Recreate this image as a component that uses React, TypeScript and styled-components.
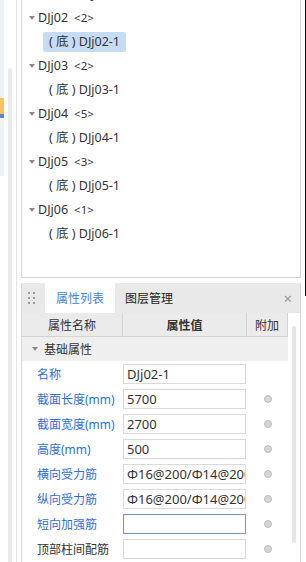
import React from "react";
import styled, { createGlobalStyle } from "styled-components";

const GlobalStyle = createGlobalStyle`
  html, body {
    margin: 0;
    padding: 0;
    width: 306px;
    height: 562px;
    overflow: hidden;
    background: #fff;
  }
  body {
    font-family: "Noto Sans", "Noto Sans CJK SC", sans-serif;
    font-size: 12px;
    color: #333;
  }
  * { box-sizing: border-box; }
`;

const Page = styled.div`
  display: flex;
  height: 562px;
`;

const LeftStrip = styled.div`
  width: 17px;
  display: flex;
  border-right: 1px solid #e3e3e3;
`;

const Edge = styled.div`
  width: 4px;
  height: 176px;
  background: #f2f3f5;
  padding-top: 98px;
`;

const EdgeIcon = styled.div`
  width: 4px;
  height: 20px;
  background: #f2c464;
  border-bottom: 4px solid #5b86c8;
`;

const Track = styled.div`
  width: 4px;
  margin: 68px 0 0 4px;
  background: #ebebeb;
  border-radius: 2px 2px 0 0;
`;

const Main = styled.div`
  width: 284px;
  padding-left: 4px;
  display: flex;
  flex-direction: column;
  gap: 5px;
`;

const RightEdge = styled.div`
  width: 5px;
  border-right: 1px solid #111;
  height: 296px;
`;

/* ---------- tree ---------- */

const TreeBox = styled.div`
  height: 278px;
  border: 1px solid #d9d9d9;
  border-top: none;
  overflow: hidden;
  flex-shrink: 0;
`;

// scrolled: the first leaf sits mostly above the top edge
const TreeList = styled.div`
  margin-top: -18px;
`;

const TreeRow = styled.div`
  height: 24px;
  display: flex;
  align-items: center;
  padding-left: 7px;
  line-height: 20px;
  font-size: 12.5px;
  color: #333;
  white-space: nowrap;
`;

const Caret = styled.span`
  width: 0;
  height: 0;
  border-left: 3px solid transparent;
  border-right: 3px solid transparent;
  border-top: 4px solid #8a8a8a;
  margin-right: 3px;
`;

const Count = styled.span`
  margin-left: 6px;
  font-size: 11.5px;
`;

const Leaf = styled.div<{ $active?: boolean }>`
  margin-left: 14px;
  height: 20px;
  padding: 0 6px;
  border-radius: 2px;
  background: ${(p) => (p.$active ? "#c6dcf3" : "transparent")};
`;

/* ---------- properties panel ---------- */

const PropPanel = styled.div`
  flex: 1;
  border-left: 1px solid #d9d9d9;
  border-right: 1px solid #d9d9d9;
  display: flex;
  flex-direction: column;
  min-height: 0;
`;

const TabBar = styled.div`
  height: 30px;
  background: #e9e9e9;
  display: flex;
  align-items: stretch;
  flex-shrink: 0;
`;

const Grip = styled.div`
  width: 23px;
  display: grid;
  grid-template-columns: 2px 2px;
  grid-auto-rows: 2px;
  column-gap: 3px;
  row-gap: 3px;
  align-content: center;
  padding-left: 6px;
  span {
    background: #9a9a9a;
  }
`;

const Tab = styled.div<{ $active?: boolean }>`
  padding: 0 ${(p) => (p.$active ? "11px" : "10px")};
  display: flex;
  align-items: center;
  font-size: 12px;
  background: ${(p) => (p.$active ? "#fff" : "transparent")};
  color: ${(p) => (p.$active ? "#3f86e4" : "#222")};
`;

const Close = styled.div`
  margin-left: auto;
  padding-right: 8px;
  display: flex;
  align-items: center;
  color: #9b9b9b;
  font-size: 15px;
`;

const Body = styled.div`
  flex: 1;
  display: flex;
  min-height: 0;
  overflow: hidden;
`;

const Table = styled.div`
  width: 266px;
  flex-shrink: 0;
`;

const Gutter = styled.div`
  flex: 1;
  padding: 13px 0 0 4px;
`;

const Thumb = styled.div`
  width: 4px;
  height: 217px;
  background: #e6e6e6;
  border-radius: 2px;
`;

const Columns = styled.div`
  display: grid;
  grid-template-columns: 101px 124px 41px;
`;

const HeadCell = styled.div<{ $bold?: boolean }>`
  height: 24px;
  background: #ebebeb;
  border-right: 1px solid #d4d4d4;
  border-bottom: 1px solid #d4d4d4;
  display: flex;
  align-items: center;
  justify-content: center;
  font-size: 12px;
  font-weight: ${(p) => (p.$bold ? 700 : 400)};
  color: #333;
`;

const GroupRow = styled.div`
  height: 24px;
  background: #efefef;
  display: flex;
  align-items: center;
  padding-left: 10px;
  font-size: 12px;
  color: #333;
`;

const GroupCaret = styled(Caret)`
  margin-right: 6px;
`;

const Row = styled(Columns)`
  height: 25px;
  align-items: center;
`;

const Label = styled.div<{ $plain?: boolean }>`
  padding-left: 15px;
  font-size: 12px;
  color: ${(p) => (p.$plain ? "#333" : "#2f6ee0")};
  white-space: nowrap;
`;

const Field = styled.div<{ $focused?: boolean }>`
  width: 123px;
  height: 20px;
  border: 1px solid ${(p) => (p.$focused ? "#6b93d6" : "#dadada")};
  padding: 0 3px;
  font-size: 13px;
  line-height: 18px;
  color: #333;
  white-space: nowrap;
  overflow: hidden;
`;

const DotCell = styled.div`
  display: flex;
  justify-content: center;
`;

const Dot = styled.span`
  width: 8px;
  height: 8px;
  border-radius: 50%;
  background: #d6d6d6;
  border: 1px solid #bdbdbd;
`;

const groups = [
  { name: "DJj02", count: 2, child: "DJj02-1" },
  { name: "DJj03", count: 2, child: "DJj03-1" },
  { name: "DJj04", count: 5, child: "DJj04-1" },
  { name: "DJj05", count: 3, child: "DJj05-1" },
  { name: "DJj06", count: 1, child: "DJj06-1" },
];

const bar = "Φ16@200/Φ14@200";

const props = [
  { label: "名称", value: "DJj02-1", dot: false },
  { label: "截面长度(mm)", value: "5700", dot: true },
  { label: "截面宽度(mm)", value: "2700", dot: true },
  { label: "高度(mm)", value: "500", dot: true },
  { label: "横向受力筋", value: bar, dot: true },
  { label: "纵向受力筋", value: bar, dot: true },
  { label: "短向加强筋", value: "", dot: true, focused: true },
  { label: "顶部柱间配筋", value: "", dot: true, plain: true },
];

export default function App() {
  return (
    <>
      <GlobalStyle />
      <Page>
        <LeftStrip>
          <Edge>
            <EdgeIcon />
          </Edge>
          <Track />
        </LeftStrip>
        <Main>
          <TreeBox>
            <TreeList>
              <TreeRow>
                <Leaf>( 底 ) DJj01-1</Leaf>
              </TreeRow>
              {groups.map((g, i) => (
                <React.Fragment key={g.name}>
                  <TreeRow>
                    <Caret />
                    {g.name}
                    <Count>&lt;{g.count}&gt;</Count>
                  </TreeRow>
                  <TreeRow>
                    <Leaf $active={i === 0}>( 底 ) {g.child}</Leaf>
                  </TreeRow>
                </React.Fragment>
              ))}
            </TreeList>
          </TreeBox>
          <PropPanel>
            <TabBar>
              <Grip>
                <span /><span /><span /><span /><span /><span />
              </Grip>
              <Tab $active>属性列表</Tab>
              <Tab>图层管理</Tab>
              <Close>×</Close>
            </TabBar>
            <Body>
              <Table>
                <Columns>
                  <HeadCell>属性名称</HeadCell>
                  <HeadCell $bold>属性值</HeadCell>
                  <HeadCell>附加</HeadCell>
                </Columns>
                <GroupRow>
                  <GroupCaret />
                  基础属性
                </GroupRow>
                {props.map((p) => (
                  <Row key={p.label}>
                    <Label $plain={p.plain}>{p.label}</Label>
                    <Field $focused={p.focused}>{p.value}</Field>
                    <DotCell>{p.dot && <Dot />}</DotCell>
                  </Row>
                ))}
              </Table>
              <Gutter>
                <Thumb />
              </Gutter>
            </Body>
          </PropPanel>
        </Main>
        <RightEdge />
      </Page>
    </>
  );
}
